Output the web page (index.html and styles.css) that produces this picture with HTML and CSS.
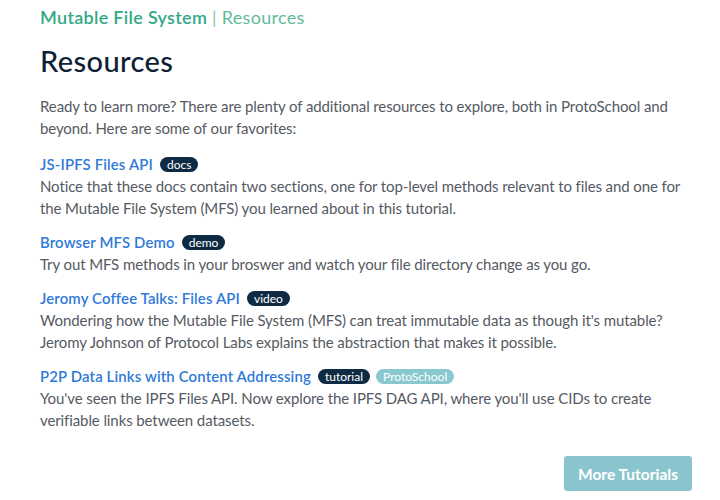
FILE: index.html
```html
<!DOCTYPE html>
<html>
<head>
<meta charset="utf-8">
<link rel="stylesheet" href="styles.css">
</head>
<body>
<div class="page">
  <div class="crumbs"><span class="crumb-main">Mutable File System</span> <span class="crumb-sep">|</span> <span class="crumb-sub">Resources</span></div>
  <h1 class="title">Resources</h1>
  <p class="intro">Ready to learn more? There are plenty of additional resources to explore, both in ProtoSchool and beyond. Here are some of our favorites:</p>
  <div class="res">
    <div class="res-head"><a class="res-link">JS-IPFS Files API</a><span class="badge">docs</span></div>
    <p class="res-desc">Notice that these docs contain two sections, one for top-level methods relevant to files and one for the Mutable File System (MFS) you learned about in this tutorial.</p>
  </div>
  <div class="res">
    <div class="res-head"><a class="res-link">Browser MFS Demo</a><span class="badge">demo</span></div>
    <p class="res-desc">Try out MFS methods in your broswer and watch your file directory change as you go.</p>
  </div>
  <div class="res">
    <div class="res-head"><a class="res-link">Jeromy Coffee Talks: Files API</a><span class="badge">video</span></div>
    <p class="res-desc">Wondering how the Mutable File System (MFS) can treat immutable data as though it's mutable? Jeromy Johnson of Protocol Labs explains the abstraction that makes it possible.</p>
  </div>
  <div class="res">
    <div class="res-head"><a class="res-link">P2P Data Links with Content Addressing</a><span class="badge">tutorial</span><span class="badge badge-ps">ProtoSchool</span></div>
    <p class="res-desc">You've seen the IPFS Files API. Now explore the IPFS DAG API, where you'll use CIDs to create verifiable links between datasets.</p>
  </div>
  <div class="actions"><button class="btn">More Tutorials</button></div>
</div>
</body>
</html>
```
FILE: styles.css
```css
html, body { margin: 0; padding: 0; background: #fff; }
body { font-family: Lato, "Noto Sans", sans-serif; color: #555a63; }
.page { padding: 5px 28px 0 40px; }
.crumbs { font-size: 18px; line-height: 24px; letter-spacing: 0.3px; }
.crumb-main { color: #33a886; font-weight: 600; }
.crumb-sep { color: #7cc6ac; }
.crumb-sub { color: #5fbb98; }
.title { margin: 14px 0 0; font-size: 29px; line-height: 36px; font-weight: 500; color: #0e1e35; letter-spacing: 0.4px; }
.intro { margin: 16px 0 0; font-size: 15px; line-height: 22px; letter-spacing: -0.1px; }
.res { margin-top: 12px; }
.intro + .res { margin-top: 14px; }
.res-head { display: flex; align-items: center; height: 22px; }
.res-link { color: #2f7ad8; font-size: 14.9px; font-weight: 600; letter-spacing: 0.15px; margin-right: 7px; }
.badge { display: inline-block; background: #0f2b44; color: #fff; font-size: 12px; line-height: 15px; padding: 0 7px; border-radius: 8px; }
.badge-ps { background: #8ac8cf; margin-left: 6px; padding: 0 7px; }
.res-desc { margin: 0; font-size: 15px; line-height: 22px; letter-spacing: -0.1px; }
.actions { display: flex; justify-content: flex-end; margin-top: 25px; }
.btn { background: #8ac5cd; color: #fff; border: none; border-radius: 3px; font-family: Lato, sans-serif; font-weight: 700; font-size: 15.5px; width: 128px; height: 35px; padding: 0; }
```
